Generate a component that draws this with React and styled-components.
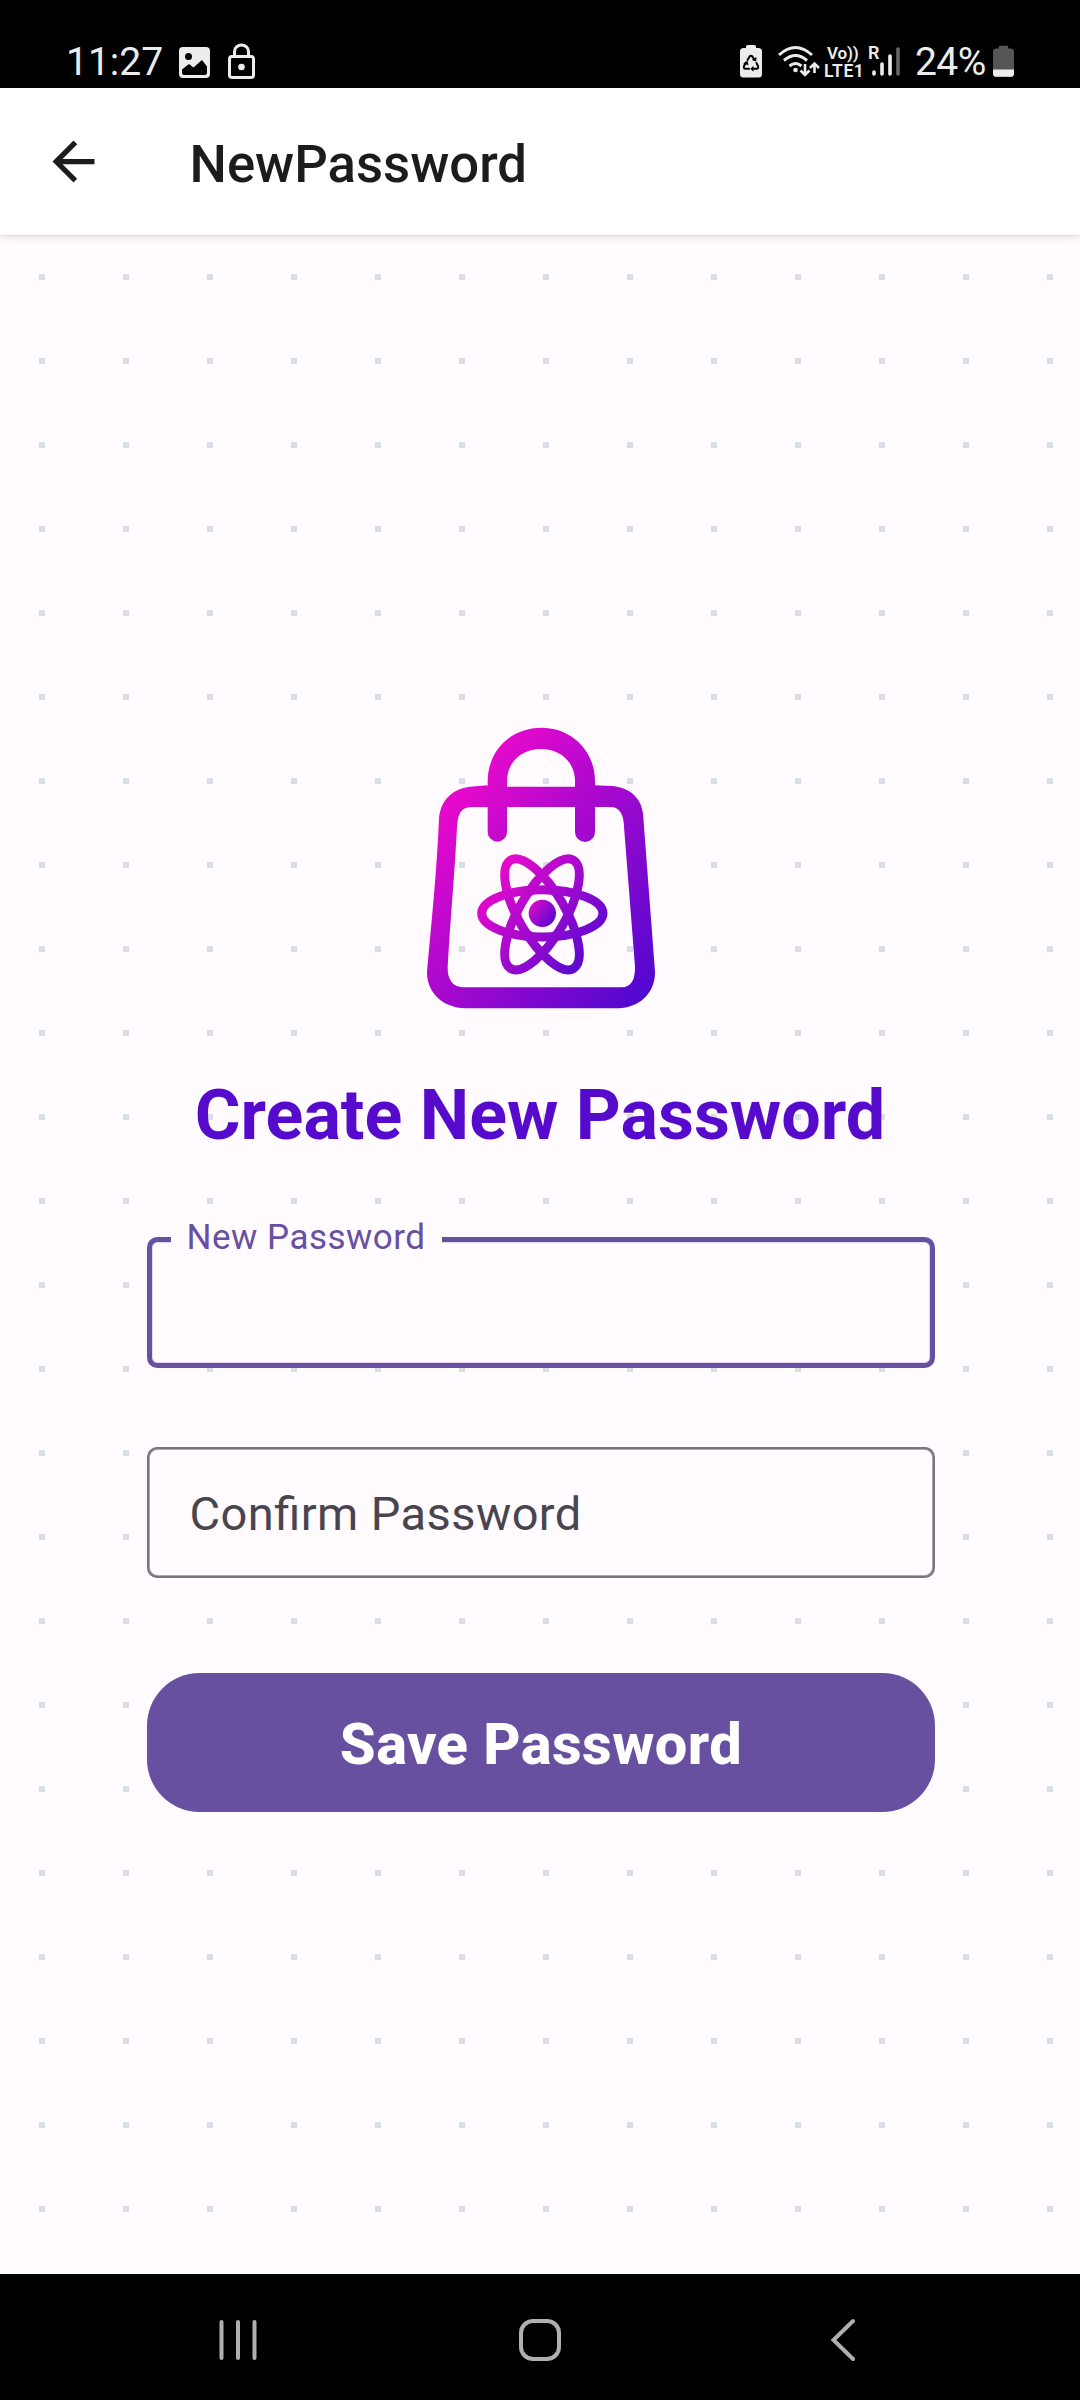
import React from "react";
import styled, { createGlobalStyle } from "styled-components";

const GlobalStyle = createGlobalStyle`
  *, *::before, *::after { box-sizing: border-box; }
  body { margin: 0; background: #000; font-family: Roboto, "Liberation Sans", sans-serif; }
`;

const Screen = styled.div`
  display: flex;
  flex-direction: column;
  width: 1080px;
  height: 2400px;
  overflow: hidden;
`;

const StatusBar = styled.header`
  display: flex;
  justify-content: space-between;
  flex: none;
  height: 88px;
  padding: 38px 66px 0 66px;
  background: #000;
  color: #ececec;
`;

const StatusGroup = styled.div`
  display: flex;
  align-items: flex-start;
  height: 46px;
`;

const StatusText = styled.span`
  width: ${(p) => p.$width}px;
  font-size: 39px;
  line-height: 48px;
  letter-spacing: ${(p) => p.$spacing || 0}px;
  white-space: nowrap;
`;

const Glyph = styled.svg`
  display: block;
  flex: none;
  margin-left: ${(p) => p.$gap || 0}px;
`;

const Carrier = styled.div`
  display: flex;
  flex-direction: column;
  width: 40px;
  margin: 6px 0 0 4px;
  font-weight: 600;
  line-height: 18px;
`;

const CarrierTop = styled.span`
  padding-left: 3px;
  font-size: 17px;
  letter-spacing: -0.2px;
  white-space: nowrap;
`;

const CarrierBottom = styled.span`
  font-size: 17.5px;
  letter-spacing: 0.6px;
`;

const Signal = styled.div`
  position: relative;
  width: 32px;
  height: 46px;
  margin: 0 15px 0 4px;
`;

const Roaming = styled.span`
  position: absolute;
  left: 0;
  top: 6px;
  font-size: 18px;
  font-weight: 600;
  line-height: 18px;
`;

const AppBar = styled.nav`
  display: flex;
  align-items: center;
  flex: none;
  height: 147px;
  padding: 0 42px;
  background: #fff;
  position: relative;
  box-shadow: 0 2px 10px rgba(0, 0, 0, 0.11), 0 1px 2px rgba(0, 0, 0, 0.07);
`;

const BackButton = styled.button`
  display: flex;
  width: 63px;
  height: 63px;
  padding: 0;
  margin: 0 84.5px 0 0;
  border: 0;
  background: none;
`;

const BarTitle = styled.h1`
  margin: 4px 0 0;
  color: #1c1c1e;
  font-size: 52.7px;
  font-weight: 500;
  line-height: 62px;
`;

const Content = styled.main`
  display: flex;
  flex-direction: column;
  align-items: center;
  flex: none;
  height: 2039px;
  padding-top: 475px;
  background-color: #fffbff;
  background-image: conic-gradient(
    from 0deg at 6px 6px,
    transparent 0 270deg,
    #dbdde6 270deg 360deg
  );
  background-size: 84px 84px;
  background-position: 39px 39px;
`;

const Heading = styled.h2`
  margin: 53px 0 0;
  color: #560bcc;
  font-size: 70px;
  font-weight: 700;
  line-height: 84px;
  white-space: nowrap;
`;

const Field = styled.div`
  position: relative;
  display: flex;
  align-items: center;
  width: 788px;
  height: 131px;
  margin-top: ${(p) => p.$top}px;
  margin-left: 2px;
  padding-left: 42.6px;
  border-radius: 10.5px;
  background: #fffbff;
  box-shadow: ${(p) =>
    p.$active
      ? "inset 0 0 0 5px #6750a0, inset 0 0 0 6px #e0d8ec"
      : "inset 0 0 0 2px #79747e, inset 0 0 0 3px #aca8af"};
`;

const FloatingLabel = styled.label`
  position: absolute;
  left: 24px;
  top: -19px;
  width: 271px;
  padding-left: 15.5px;
  background: #fffbff;
  color: #6750a0;
  font-size: 35px;
  line-height: 40px;
  letter-spacing: 0.5px;
  white-space: nowrap;
`;

const Placeholder = styled.label`
  margin-top: 2px;
  color: #49454f;
  font-size: 47px;
  line-height: 56px;
  letter-spacing: 0.42px;
  font-feature-settings: "liga" 1;
`;

const SaveButton = styled.button`
  width: 788px;
  height: 139px;
  margin-top: 95px;
  margin-left: 2px;
  padding: 2px 0 0;
  border: 0;
  border-radius: 52.5px;
  background: #6750a0;
  color: #fff;
  font-family: inherit;
  font-size: 57.75px;
  font-weight: 800;
  line-height: 68px;
  letter-spacing: 0.45px;
`;

const SystemNav = styled.footer`
  display: flex;
  justify-content: space-between;
  flex: none;
  height: 126px;
  padding: 43px 212px 0;
  background: #000;
`;

function BagLogo() {
  return (
    <Glyph width="260" height="310" viewBox="0 0 780 930" fill="none">
      <defs>
        <linearGradient id="bag" gradientUnits="userSpaceOnUse" x1="90" y1="310" x2="750" y2="845">
          <stop offset="0" stopColor="#e609cc" />
          <stop offset="1" stopColor="#4b08d0" />
        </linearGradient>
        <linearGradient id="atom" gradientUnits="userSpaceOnUse" x1="255" y1="500" x2="565" y2="755">
          <stop offset="0" stopColor="#e609cc" />
          <stop offset="1" stopColor="#5009d0" />
        </linearGradient>
        <linearGradient id="core" x1="0" y1="0.1" x2="1" y2="0.9">
          <stop offset="0" stopColor="#e609cc" />
          <stop offset="1" stopColor="#4b08d0" />
        </linearGradient>
        <mask id="orbits" maskUnits="userSpaceOnUse" x="180" y="410" width="440" height="410">
          <g stroke="#fff" strokeWidth="27">
            <ellipse cx="397" cy="610" rx="182" ry="71" />
            <ellipse cx="396" cy="613" rx="188" ry="70" transform="rotate(60 396 613)" />
            <ellipse cx="396" cy="613" rx="188" ry="70" transform="rotate(-60 396 613)" />
          </g>
          <circle cx="397" cy="611" r="69" stroke="#fff" strokeWidth="12" />
        </mask>
      </defs>
      <path
        fill="url(#bag)"
        d="M233 366V214C233 120 305 53 394 53S555 120 555 214V366A30 30 0 0 1 495 366V214C495 155 450 117 393 117S291 155 291 214V366A29 29 0 0 1 233 366Z"
      />
      <path
        fill="url(#bag)"
        fillRule="evenodd"
        d="M233 226L180 230C128 236 92 270 87 325C81 480 64 640 51 785C50 850 100 893 165 895H625C688 893 736 850 735 785L699 310C694 265 660 232 605 228L555 226V230H233ZM183 291H605C630 293 641 315 642 350L675 770C675 810 665 830 635 832H160C125 830 112 805 113 770C120 640 134 490 141 350C144 310 153 293 183 291Z"
      />
      <rect x="180" y="410" width="440" height="410" fill="url(#atom)" mask="url(#orbits)" />
      <circle cx="397" cy="610" r="41" fill="url(#core)" />
    </Glyph>
  );
}

function BatteryShape({ color }) {
  return (
    <path
      fill={color}
      d="M6 3V1.5Q6 0 7.5 0H14.5Q16 0 16 1.5V3H18.5Q22 3 22 6.5V29Q22 32.5 18.5 32.5H3.5Q0 32.5 0 29V6.5Q0 3 3.5 3Z"
    />
  );
}

export default function App() {
  return (
    <Screen>
      <GlobalStyle />
      <StatusBar>
        <StatusGroup>
          <StatusText $width={113}>11:27</StatusText>
          <Glyph width="31" height="40" viewBox="0 0 31 40">
            <path
              fill="#ececec"
              fillRule="evenodd"
              d="M4 9H27Q31 9 31 13V36Q31 40 27 40H4Q0 40 0 36V13Q0 9 4 9ZM9.5 15A3.5 3.5 0 1 0 9.5 22A3.5 3.5 0 1 0 9.5 15ZM3 31.5V34.5Q3 37 5.5 37H25.5Q28 37 28 34.5V28.5L23 22L14.5 29.5L10 26Z"
            />
          </Glyph>
          <Glyph $gap={18} width="27" height="42" viewBox="0 0 27 42" fill="none" stroke="#ececec" strokeWidth="3">
            <rect x="1.5" y="18.5" width="24" height="21" rx="2.5" />
            <path d="M6.5 19V13.5A7 6.5 0 0 1 20.5 13.5V19" />
            <circle cx="13.5" cy="29" r="3.3" fill="#ececec" stroke="none" />
          </Glyph>
        </StatusGroup>
        <StatusGroup>
          <Glyph width="22" height="46" viewBox="0 -7 22 46">
            <BatteryShape color="#ececec" />
            <g fill="none" stroke="#000" strokeWidth="2" strokeLinecap="round">
              <path d="M7.5 15L9.6 11.5Q11 9.8 12.4 11.5L14.5 15M16.5 18L18 21Q18.8 23.8 16.5 23.8H13M9 23.8H5.5Q3.2 23.8 4 21L6 17.5" />
            </g>
            <path fill="#000" d="M11.8 15L16.2 16.5L16.5 12ZM13.5 20.8V26.8L10.3 23.8ZM3.2 18.5L7.5 15.8L8.5 20.3Z" />
          </Glyph>
          <Glyph $gap={16} width="42" height="46" viewBox="0 0 42 46" fill="none" stroke="#ececec" strokeWidth="3">
            <path d="M1 17Q17.5 2 34 17M6 22.5Q17.5 12.5 29 22.5M11.5 28Q17.5 23 23.5 28" />
            <circle cx="17.5" cy="32" r="2.3" fill="#ececec" stroke="none" />
            <path strokeWidth="2.6" d="M27 26V37M22.5 32.5L27 37L31.5 32.5M36.5 35V25.5M32 30L36.5 25.5L41 30" />
          </Glyph>
          <Carrier>
            <CarrierTop>Vo))</CarrierTop>
            <CarrierBottom>LTE1</CarrierBottom>
          </Carrier>
          <Signal>
            <Roaming>R</Roaming>
            <svg width="32" height="46" viewBox="0 0 32 46" strokeWidth="3.6" strokeLinecap="round" stroke="#ececec">
              <path d="M6 34V36M14 26V36M22 18V36" />
              <path stroke="#666" d="M30 11V36" />
            </svg>
          </Signal>
          <StatusText $width={78} $spacing={-0.6}>24%</StatusText>
          <Glyph width="21" height="46" viewBox="0 -7 22 46">
            <clipPath id="charge">
              <rect y="25" width="22" height="8" />
            </clipPath>
            <BatteryShape color="#555" />
            <g clipPath="url(#charge)">
              <BatteryShape color="#ececec" />
            </g>
          </Glyph>
        </StatusGroup>
      </StatusBar>
      <AppBar>
        <BackButton aria-label="Back">
          <Glyph width="63" height="63" viewBox="0 0 24 24">
            <path fill="#1c1c1e" d="M20 11H7.83l5.59-5.59L12 4l-8 8 8 8 1.41-1.41L7.83 13H20v-2z" />
          </Glyph>
        </BackButton>
        <BarTitle>NewPassword</BarTitle>
      </AppBar>
      <Content>
        <BagLogo />
        <Heading>Create New Password</Heading>
        <Field $active $top={80}>
          <FloatingLabel>New Password</FloatingLabel>
        </Field>
        <Field $top={79}>
          <Placeholder>Confirm Password</Placeholder>
        </Field>
        <SaveButton>Save Password</SaveButton>
      </Content>
      <SystemNav>
        <Glyph width="52" height="46" viewBox="0 0 52 46" stroke="#b0b0b0" strokeWidth="4" strokeLinecap="round">
          <path d="M9.5 5V41M26 5V41M42.5 5V41" />
        </Glyph>
        <Glyph width="46" height="46" viewBox="0 0 46 46" fill="none" stroke="#b0b0b0" strokeWidth="4">
          <rect x="4" y="4" width="38" height="38" rx="12" />
        </Glyph>
        <Glyph width="52" height="46" viewBox="0 0 52 46" fill="none" stroke="#b0b0b0" strokeWidth="4" strokeLinecap="round">
          <path d="M37 4L17.5 23L37 42" />
        </Glyph>
      </SystemNav>
    </Screen>
  );
}
